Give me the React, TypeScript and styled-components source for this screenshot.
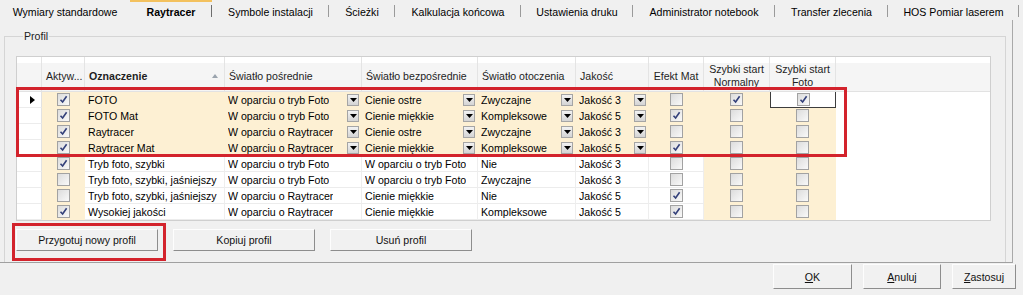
import React from 'react';
import styled, { createGlobalStyle } from 'styled-components';

const GlobalStyle = createGlobalStyle`
  html, body { margin: 0; padding: 0; background: #f0f0f0; }
  body {
    font-family: "Liberation Sans", Arial, sans-serif;
    font-size: 10.6px;
    color: #000;
  }
`;

const tabs = [
  { label: 'Wymiary standardowe', w: 130 },
  { label: 'Raytracer', w: 82, active: true },
  { label: 'Symbole instalacji', w: 117 },
  { label: 'Ścieżki', w: 66 },
  { label: 'Kalkulacja końcowa', w: 126 },
  { label: 'Ustawienia druku', w: 112 },
  { label: 'Administrator notebook', w: 142 },
  { label: 'Transfer zlecenia', w: 113 },
  { label: 'HOS Pomiar laserem', w: 131 },
];

// column widths of the grid
const cols = '25px 43px 140px 137px 116px 98px 73px 55px 66px 66px 1fr';

type Row = {
  on: boolean;
  name: string;
  p: string;
  b: string;
  o: string;
  j: string;
  mat: boolean;
  n?: boolean;
  f?: boolean;
  hl?: boolean;
};

const rows: Row[] = [
  { on: true, name: 'FOTO', p: 'W oparciu o tryb Foto', b: 'Cienie ostre', o: 'Zwyczajne', j: 'Jakość 3', mat: false, n: true, f: true, hl: true },
  { on: true, name: 'FOTO Mat', p: 'W oparciu o tryb Foto', b: 'Cienie miękkie', o: 'Kompleksowe', j: 'Jakość 5', mat: true, hl: true },
  { on: true, name: 'Raytracer', p: 'W oparciu o Raytracer', b: 'Cienie ostre', o: 'Zwyczajne', j: 'Jakość 3', mat: false, hl: true },
  { on: true, name: 'Raytracer Mat', p: 'W oparciu o Raytracer', b: 'Cienie miękkie', o: 'Kompleksowe', j: 'Jakość 5', mat: true, hl: true },
  { on: true, name: 'Tryb foto, szybki', p: 'W oparciu o tryb Foto', b: 'W oparciu o tryb Foto', o: 'Nie', j: 'Jakość 3', mat: false },
  { on: false, name: 'Tryb foto, szybki, jaśniejszy', p: 'W oparciu o tryb Foto', b: 'W oparciu o tryb Foto', o: 'Zwyczajne', j: 'Jakość 3', mat: false },
  { on: false, name: 'Tryb foto, szybki, jaśniejszy', p: 'W oparciu o Raytracer', b: 'Cienie miękkie', o: 'Nie', j: 'Jakość 5', mat: true },
  { on: true, name: 'Wysokiej jakości', p: 'W oparciu o Raytracer', b: 'Cienie miękkie', o: 'Kompleksowe', j: 'Jakość 5', mat: true },
];

const Check = ({ on }: { on: boolean }) => (
  <Box>
    {on && (
      <svg width="9" height="9" viewBox="0 0 9 9">
        <path d="M1.5 4.8 L3.6 7 L7.6 1.2" fill="none" stroke="#33407a" strokeWidth="1.6" />
      </svg>
    )}
  </Box>
);

const Drop = () => (
  <DropBtn>
    <svg width="7" height="4" viewBox="0 0 7 4">
      <path d="M0 0 H7 L3.5 4 Z" fill="#000" />
    </svg>
  </DropBtn>
);

const App = () => {
  return (
    <Window>
      <GlobalStyle />
      <TabStrip>
        {tabs.map((t) => (
          <Tab key={t.label} $w={t.w} $active={t.active}>
            {t.label}
          </Tab>
        ))}
      </TabStrip>

      <TabPage>
        <Group>
          <Legend>Profil</Legend>
          <Grid>
            <HeadRow>
              <HCell />
              <HCell>Aktyw...</HCell>
              <HCell $bold>
                Oznaczenie
                <SortArrow>
                  <svg width="6" height="4" viewBox="0 0 6 4">
                    <path d="M0 4 L3 0 L6 4 Z" fill="#9aa3ad" />
                  </svg>
                </SortArrow>
              </HCell>
              <HCell>Światło pośrednie</HCell>
              <HCell>Światło bezpośrednie</HCell>
              <HCell>Światło otoczenia</HCell>
              <HCell>Jakość</HCell>
              <HCell $center>Efekt Mat</HCell>
              <HCell $center>Szybki start<br />Normalny</HCell>
              <HCell $center>Szybki start<br />Foto</HCell>
              <HCell $last />
            </HeadRow>

            {rows.map((r, i) => (
              <DataRow key={i}>
                <RowHead>
                  {i === 0 && (
                    <svg width="5" height="8" viewBox="0 0 5 8">
                      <path d="M0 0 L5 4 L0 8 Z" fill="#000" />
                    </svg>
                  )}
                </RowHead>
                <Cell $cream $center><Check on={r.on} /></Cell>
                <Cell $cream={r.hl}>{r.name}</Cell>
                <Cell $cream={r.hl}>
                  <CellText>{r.p}</CellText>
                  {r.hl && <Drop />}
                </Cell>
                <Cell $cream={r.hl}>
                  <CellText>{r.b}</CellText>
                  {r.hl && <Drop />}
                </Cell>
                <Cell $cream={r.hl}>
                  <CellText>{r.o}</CellText>
                  {r.hl && <Drop />}
                </Cell>
                <Cell $cream={r.hl}>
                  <CellText>{r.j}</CellText>
                  {r.hl && <Drop />}
                </Cell>
                <Cell $cream={r.hl} $center><Check on={r.mat} /></Cell>
                <Cell $cream $center><Check on={!!r.n} /></Cell>
                {i === 0 ? (
                  <FocusCell><Check on={!!r.f} /></FocusCell>
                ) : (
                  <Cell $cream $center><Check on={!!r.f} /></Cell>
                )}
                <Filler />
              </DataRow>
            ))}
          </Grid>

          <ButtonRow>
            <Button $w={142}>Przygotuj nowy profil</Button>
            <Button $w={142}>Kopiuj profil</Button>
            <Button $w={142}>Usuń profil</Button>
          </ButtonRow>
        </Group>
      </TabPage>

      <Footer>
        <Button $w={79} $h={25}><u>O</u>K</Button>
        <Button $w={78} $h={25}><u>A</u>nuluj</Button>
        <Button $w={64} $h={25}><u>Z</u>astosuj</Button>
      </Footer>

      {/* red annotation frames lying over the dialog */}
      <Mark style={{ left: 16, top: 87, width: 831, height: 70 }} />
      <Mark style={{ left: 12, top: 223, width: 154, height: 38 }} />
    </Window>
  );
};

export default App;

const Window = styled.div`
  position: relative;
  width: 1023px;
  height: 295px;
  overflow: hidden;
  display: flex;
  flex-direction: column;
  background: #f0f0f0;
`;

const TabStrip = styled.div`
  height: 20px;
  display: flex;
  flex-shrink: 0;
`;

const Tab = styled.div<{ $w: number; $active?: boolean }>`
  position: relative;
  width: ${(p) => p.$w}px;
  flex-shrink: 0;
  display: flex;
  align-items: center;
  justify-content: center;
  padding-top: 1px;
  box-sizing: border-box;
  font-weight: ${(p) => (p.$active ? 'bold' : 'normal')};
  border-top: 2px solid ${(p) => (p.$active ? '#f3c15e' : 'transparent')};
  white-space: nowrap;

  &::after {
    content: "";
    position: absolute;
    right: 0;
    top: 3px;
    bottom: 3px;
    width: 1px;
    background: ${(p) => (p.$active ? '#6d6d6d' : '#9a9a9a')};
  }
  &:first-child::after {
    display: none;
  }
`;

const TabPage = styled.div`
  flex: 1;
  width: 1013px;
  box-sizing: border-box;
  border-right: 1px solid #a9a9a9;
  border-bottom: 1px solid #a0a0a0;
  padding: 10px 6px 0 4px;
  display: flex;
  flex-direction: column;
`;

const Group = styled.fieldset`
  flex: 1;
  margin: 0;
  min-width: 0;
  padding: 0 0 0 11px;
  border: 1px solid #d5d5d5;
  border-bottom: none;
  box-sizing: border-box;
`;

const Legend = styled.legend`
  padding: 0 1px;
  margin-left: 7px;
  line-height: 13px;
  color: #222;
`;

const Grid = styled.div`
  margin-top: 13px;
  width: 975px;
  background: #fff;
  border: 1px solid #cfcfcf;
  box-sizing: border-box;
`;

const HeadRow = styled.div`
  display: grid;
  grid-template-columns: ${cols};
  height: 34px;
  background: linear-gradient(#fff 0 6px, #f5f5f5 6px);
  border-bottom: 1px solid #e2e2e2;
`;

const HCell = styled.div<{ $bold?: boolean; $center?: boolean; $last?: boolean }>`
  position: relative;
  display: flex;
  align-items: center;
  justify-content: ${(p) => (p.$center ? 'center' : 'flex-start')};
  text-align: ${(p) => (p.$center ? 'center' : 'left')};
  padding: 4px 0 0 ${(p) => (p.$center ? 0 : 4)}px;
  line-height: 13px;
  font-weight: ${(p) => (p.$bold ? 'bold' : 'normal')};
  color: #1e1e1e;
  border-right: 1px solid ${(p) => (p.$last ? 'transparent' : '#e4e4e4')};
  white-space: nowrap;
  overflow: hidden;
`;

const SortArrow = styled.span`
  position: absolute;
  right: 6px;
  top: 17px;
  display: flex;
`;

const DataRow = styled.div`
  display: grid;
  grid-template-columns: ${cols};
  height: 16px;
`;

const RowHead = styled.div`
  display: flex;
  align-items: center;
  padding-left: 13px;
  border-right: 1px solid #e2e2e2;
  border-bottom: 1px solid #ececec;
`;

const Cell = styled.div<{ $cream?: boolean; $center?: boolean }>`
  display: flex;
  align-items: center;
  justify-content: ${(p) => (p.$center ? 'center' : 'space-between')};
  padding-left: ${(p) => (p.$center ? 0 : 3)}px;
  padding-right: ${(p) => (p.$center ? 0 : 2)}px;
  background: ${(p) => (p.$cream ? '#fdf0d3' : '#fff')};
  border-right: 1px solid ${(p) => (p.$cream ? '#fdf0d3' : '#eeeeee')};
  border-bottom: 1px solid ${(p) => (p.$cream ? '#fdf0d3' : '#ececec')};
  white-space: nowrap;
  overflow: hidden;
`;

const CellText = styled.span`
  overflow: hidden;
`;

const FocusCell = styled.div`
  display: flex;
  align-items: center;
  justify-content: center;
  background: #fff;
  border: 1px solid #3d3d3d;
  border-top: none;
  box-sizing: border-box;
`;

const Filler = styled.div`
  background: #fff;
`;

const Box = styled.span`
  width: 11px;
  height: 11px;
  display: flex;
  align-items: center;
  justify-content: center;
  border: 1px solid #a2a2a2;
  background: linear-gradient(135deg, #dcdcdc, #f9f9f9);
`;

const DropBtn = styled.span`
  width: 10px;
  height: 10px;
  flex-shrink: 0;
  display: flex;
  align-items: center;
  justify-content: center;
  border: 1px solid #a5a5a5;
  background: linear-gradient(#f2f2f2, #d4d4d4);
`;

const ButtonRow = styled.div`
  display: flex;
  gap: 15px;
  margin-top: 8px;
`;

const Button = styled.div<{ $w: number; $h?: number }>`
  width: ${(p) => p.$w}px;
  height: ${(p) => p.$h || 22}px;
  box-sizing: border-box;
  display: flex;
  align-items: center;
  justify-content: center;
  background: #f1f1f1;
  border: 1px solid;
  border-color: #fdfdfd #8d8d8d #8d8d8d #fdfdfd;
  color: #111;
`;

const Footer = styled.div`
  height: 31px;
  flex-shrink: 0;
  display: flex;
  justify-content: flex-end;
  align-items: flex-start;
  gap: 11px;
  padding: 1px 7px 0 0;
`;

const Mark = styled.div`
  position: absolute;
  box-sizing: border-box;
  border: 3px solid #d3232c;
  pointer-events: none;
`;
